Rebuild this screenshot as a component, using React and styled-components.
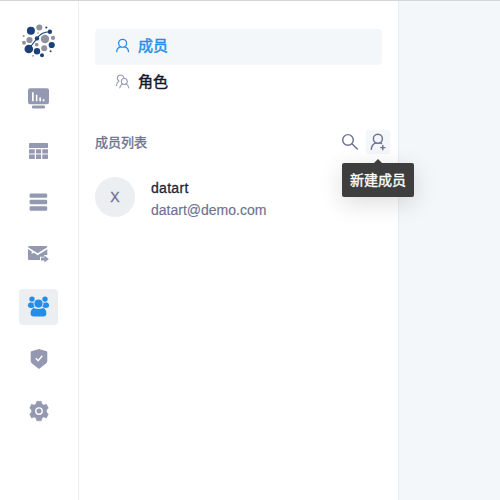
import React from "react";
import styled, { createGlobalStyle } from "styled-components";

const GlobalStyle = createGlobalStyle`
  * { box-sizing: border-box; }
  body {
    margin: 0;
    overflow: hidden;
    font-family: "Liberation Sans", "Noto Sans CJK SC", sans-serif;
    color: #212539;
  }
`;

const Page = styled.div`
  display: flex;
  width: 500px;
  height: 500px;
  border-top: 1px solid #d2d4d6;
  background: #f3f7fa;
`;

const NavBar = styled.nav`
  display: flex;
  flex-direction: column;
  align-items: center;
  flex: 0 0 79px;
  padding-top: 20px;
  background: #fff;
  border-right: 1px solid #ebeef2;
`;

const Logo = styled.svg`
  width: 40px;
  height: 40px;
  margin-bottom: 20px;
`;

const NavList = styled.div`
  display: flex;
  flex-direction: column;
  gap: 16px;
  margin-right: 1px;
`;

const NavButton = styled.a`
  display: flex;
  width: 39px;
  height: 36px;
  border-radius: 4px;
  color: ${(p) => (p.$active ? "#258de8" : "#9499b1")};
  background: ${(p) => (p.$active ? "#ebeff2" : "transparent")};
`;

const NavIcon = styled.svg`
  width: 39px;
  height: 36px;
  fill: currentColor;
`;

const Panel = styled.aside`
  flex: 0 0 320px;
  padding: 28px 16px 0;
  background: #fff;
  border-right: 1px solid #e9edf1;
`;

const MenuItem = styled.div`
  display: flex;
  align-items: center;
  gap: 7px;
  width: 287px;
  height: 36px;
  padding: 0 0 2px 20px;
  border-radius: 4px;
  font-size: 15px;
  line-height: 22px;
  -webkit-text-stroke: 0.45px currentColor;
  color: ${(p) => (p.$active ? "#258de8" : "#15172a")};
  background: ${(p) => (p.$active ? "#f3f7fa" : "transparent")};
`;

const MenuIcon = styled.svg`
  width: 16px;
  height: 16px;
  fill: none;
  stroke: ${(p) => (p.$muted ? "#9499b1" : "currentColor")};
  stroke-width: ${(p) => (p.$muted ? 1.05 : 1.3)};
  stroke-linecap: round;
`;

const ListHeader = styled.header`
  display: flex;
  align-items: center;
  height: 24px;
  margin-top: 29px;
`;

const ListTitle = styled.h1`
  flex: 1;
  margin: 0;
  padding-top: 2px;
  font-size: 13px;
  line-height: 20px;
  font-weight: 400;
  -webkit-text-stroke: 0.35px currentColor;
  color: #6c7192;
`;

const ToolButton = styled.div`
  position: relative;
  width: 24px;
  height: 24px;
  margin-left: ${(p) => (p.$hovered ? "4px" : "0")};
  margin-right: ${(p) => (p.$hovered ? "-8px" : "0")};
  border-radius: 2px;
  background: ${(p) => (p.$hovered ? "#f3f7fa" : "transparent")};
`;

const ToolIcon = styled.svg`
  display: block;
  width: 24px;
  height: 24px;
  fill: none;
  stroke: #6c7192;
  stroke-width: 1.45;
  stroke-linecap: round;
`;

const Tooltip = styled.div`
  position: absolute;
  z-index: 2;
  top: 33px;
  left: -24px;
  width: 72px;
  height: 34px;
  border-radius: 2px;
  background: rgba(50, 50, 50, 0.94);
  box-shadow: 0 6px 24px rgba(0, 0, 0, 0.14);
  color: #fff;
  font-size: 14px;
  line-height: 34px;
  text-align: center;
  white-space: nowrap;
  -webkit-text-stroke: 0.35px currentColor;

  &::before {
    content: "";
    position: absolute;
    top: -4px;
    left: 32px;
    border: 4px solid transparent;
    border-top: 0;
    border-bottom-color: #3e3e3e;
  }
`;

const Member = styled.article`
  display: flex;
  gap: 16px;
  margin-top: 23px;
`;

const Avatar = styled.div`
  display: flex;
  align-items: center;
  justify-content: center;
  width: 40px;
  height: 40px;
  border-radius: 50%;
  background: #ebeff2;
  color: #6c7192;
  font-size: 14px;
  -webkit-text-stroke: 0.3px currentColor;
`;

const MemberName = styled.div`
  font-size: 14px;
  line-height: 22px;
  letter-spacing: 0.3px;
  -webkit-text-stroke: 0.3px currentColor;
`;

const MemberMail = styled.div`
  font-size: 14px;
  line-height: 22px;
  -webkit-text-stroke: 0.15px currentColor;
  color: #6c7192;
`;

const NAVY = "#1b4178";
const GREY = "#8f929c";
const logoDots = [
  [11.9, 9.8, 4, NAVY], [20.3, 6.4, 3, GREY], [27.3, 6.5, 1, NAVY],
  [30.9, 10.8, 2.2, NAVY], [4.7, 15, 1, GREY], [10.5, 19, 3.1, GREY],
  [18, 17.4, 2.2, NAVY], [26, 18, 4.2, GREY], [34, 16.9, 2.1, GREY],
  [5, 21.8, 2, GREY], [17.7, 23.6, 1.9, GREY], [32.7, 24, 3.1, NAVY],
  [9.8, 28, 4.3, NAVY], [25.2, 27.3, 3, GREY], [18, 30.2, 3.2, NAVY],
  [31.6, 30.3, 1, NAVY], [14, 34.8, 0.9, GREY], [23, 34.3, 2, NAVY],
  [19, 12, 0.8, GREY],
];

const navIcons = [
  {
    id: "viz",
    art: (
      <>
        <path fillRule="evenodd" d="M11 7.2h17a2 2 0 0 1 2 2v12a2 2 0 0 1-2 2H11a2 2 0 0 1-2-2v-12a2 2 0 0 1 2-2ZM13 11.3v9h1.7v-9ZM16.9 13.8v6.5h1.5v-6.5ZM20.3 16.4v3.9H22v-3.9ZM23.7 18.2v2.1h1.7v-2.1Z" />
        <rect x="13" y="24.4" width="13" height="3" rx="1.2" />
      </>
    ),
  },
  {
    id: "view",
    art: (
      <path d="M10.8 10H28.300q.7 0 .7.7V15H10v-4.300q0-.7.8-.7ZM10 16.200h5.800v4.200H10ZM17 16.200h5.100v4.200H17ZM23.300 16.200H29v4.200h-5.700ZM10 21.500h5.800V26h-5q-.8 0-.8-.8ZM17 21.500h5.100V26H17ZM23.300 21.500H29v3.700q0 .8-.8.8h-4.900Z" />
    ),
  },
  {
    id: "source",
    art: (
      <>
        <rect x="10.600" y="8.600" width="17.600" height="4.200" rx="1.200" />
        <rect x="10.600" y="14.700" width="17.600" height="4.600" rx="1.200" />
        <rect x="10.600" y="21.200" width="17.600" height="4.600" rx="1.200" />
      </>
    ),
  },
  {
    id: "schedule",
    art: (
      <>
        <path d="M10.300 9H27q1.300 0 1.300 1.200l-9.600 6-9.600-6Q9 9 10.300 9ZM9 12l3.800 2.500-.3 2.600 2.400-1.300 3.800 2.500 9.600-6v5.600h-3.200v1.800H21v3.200H10.300Q9 22.900 9 21.700Z" />
        <path d="M22 20.500h3.400v-2l4.500 3.500-4.500 3.500v-2H22Z" />
      </>
    ),
  },
  {
    id: "members",
    active: true,
    art: (
      <>
        <circle cx="13" cy="10.100" r="2.700" />
        <circle cx="26" cy="10.100" r="2.700" />
        <circle cx="19.500" cy="14.600" r="4.100" />
        <path d="M11.300 13.300q1.300.6 3.200.3-.2 2.600 1.100 4.200-1.300 1.100-2.600 1.100-4.200.2-4.200-2.400 0-2.500 2.500-3.200ZM27.700 13.300q-1.300.6-3.200.3.2 2.600-1.100 4.200 1.300 1.100 2.600 1.100 4.200.2 4.200-2.400 0-2.500-2.500-3.200Z" />
        <path d="M14.800 18.900q4.700 2 9.400 0 3.200 1.300 3.200 5.400 0 3.300-3.200 3.300h-9.400q-3.200 0-3.200-3.300 0-4.100 3.200-5.400Z" />
      </>
    ),
  },
  {
    id: "permissions",
    art: (
      <>
        <path d="m20 8 7.600 2.200q.7.200.7.800v9.100q0 1.300-1 2.200L20 28l-7.300-5.700q-1-.9-1-2.200V11q0-.6.7-.8Z" />
        <path d="m16.800 17.200 2.400 2.500 4.100-5" fill="none" stroke="#fff" strokeWidth="1.400" />
      </>
    ),
  },
  {
    id: "settings",
    art: (
      <>
        <path d="m17.700 8.300h4.600l.7 2.800 1.700 1 2.800-.8 1.800 3.700-1.800 2.100v2l1.800 2.100-1.800 3.700-2.800-.8-1.700 1-.7 2.700h-4.600l-.7-2.700-1.700-1-2.800.8-1.800-3.700 1.800-2.100v-2l-1.800-2.100 1.800-3.700 2.800.8 1.700-1Z" strokeLinejoin="round" stroke="currentColor" strokeWidth=".5" />
        <circle cx="20" cy="18.100" r="3.200" fill="none" stroke="#fff" strokeWidth="1.400" />
      </>
    ),
  },
];

export default function App() {
  return (
    <>
      <GlobalStyle />
      <Page>
        <NavBar>
          <Logo viewBox="0 0 40 40">
            <path d="M9.800 28 18 17.400Q22 11 30.900 10.800" fill="none" stroke={NAVY} strokeWidth="1.100" />
            {logoDots.map(([x, y, r, color]) => (
              <circle key={`${x}-${y}`} cx={x} cy={y} r={r} fill={color} />
            ))}
          </Logo>
          <NavList>
            {navIcons.map((item) => (
              <NavButton key={item.id} $active={item.active}>
                <NavIcon viewBox="0 0 39 36">{item.art}</NavIcon>
              </NavButton>
            ))}
          </NavList>
        </NavBar>
        <Panel>
          <MenuItem $active>
            <MenuIcon viewBox="0 0 16 16">
              <circle cx="7.600" cy="5.300" r="4" />
              <path d="M1.700 13.700q.3-3.900 4.200-5M9.300 8.700q3.900 1.100 4.200 5" />
            </MenuIcon>
            成员
          </MenuItem>
          <MenuItem>
            <MenuIcon $muted viewBox="0 0 16 16">
              <path d="M8.900 3.700A3.300 3.300 0 1 0 4 7.100Q1.700 8.400 1.400 11.700" />
              <circle cx="9.300" cy="7.500" r="3" />
              <path d="M4.800 13.900q.4-2.900 2.800-3.900M11 10q2.400 1 2.800 3.900" />
            </MenuIcon>
            角色
          </MenuItem>
          <ListHeader>
            <ListTitle>成员列表</ListTitle>
            <ToolButton>
              <ToolIcon viewBox="0 0 24 24">
                <circle cx="10" cy="9.900" r="5.300" />
                <path d="m13.900 13.800 5.400 5.300" />
              </ToolIcon>
            </ToolButton>
            <ToolButton $hovered>
              <ToolIcon viewBox="0 0 24 24">
                <circle cx="11.900" cy="8.700" r="4.500" />
                <path d="M5.300 19.200q.4-4.800 4.700-6.300M14 12.700l1.500.8M16.800 15.500v4.200M14.700 17.600h4.200" />
              </ToolIcon>
              <Tooltip>新建成员</Tooltip>
            </ToolButton>
          </ListHeader>
          <Member>
            <Avatar>X</Avatar>
            <div>
              <MemberName>datart</MemberName>
              <MemberMail>datart@demo.com</MemberMail>
            </div>
          </Member>
        </Panel>
      </Page>
    </>
  );
}
